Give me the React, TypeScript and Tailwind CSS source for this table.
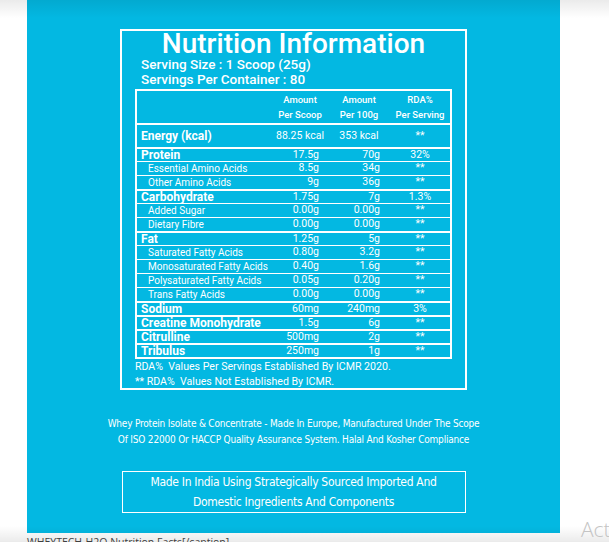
type Row = {
  label: string;
  scoop: string;
  per100: string;
  rda: string;
  sub?: boolean;
};

const rows: Row[] = [
  { label: "Protein", scoop: "17.5g", per100: "70g", rda: "32%" },
  { label: "Essential Amino Acids", scoop: "8.5g", per100: "34g", rda: "**", sub: true },
  { label: "Other Amino Acids", scoop: "9g", per100: "36g", rda: "**", sub: true },
  { label: "Carbohydrate", scoop: "1.75g", per100: "7g", rda: "1.3%" },
  { label: "Added Sugar", scoop: "0.00g", per100: "0.00g", rda: "**", sub: true },
  { label: "Dietary Fibre", scoop: "0.00g", per100: "0.00g", rda: "**", sub: true },
  { label: "Fat", scoop: "1.25g", per100: "5g", rda: "**" },
  { label: "Saturated Fatty Acids", scoop: "0.80g", per100: "3.2g", rda: "**", sub: true },
  { label: "Monosaturated Fatty Acids", scoop: "0.40g", per100: "1.6g", rda: "**", sub: true },
  { label: "Polysaturated Fatty Acids", scoop: "0.05g", per100: "0.20g", rda: "**", sub: true },
  { label: "Trans Fatty Acids", scoop: "0.00g", per100: "0.00g", rda: "**", sub: true },
  { label: "Sodium", scoop: "60mg", per100: "240mg", rda: "3%" },
  { label: "Creatine Monohydrate", scoop: "1.5g", per100: "6g", rda: "**" },
  { label: "Citrulline", scoop: "500mg", per100: "2g", rda: "**" },
  { label: "Tribulus", scoop: "250mg", per100: "1g", rda: "**" },
];

const cols = "grid grid-cols-[135px_56px_62px_1fr]";

function NutrientRow({ row }: { row: Row }) {
  return (
    <div
      className={`${cols} h-[14px] items-center border-white ${
        row.sub ? "border-t" : "border-t-2"
      }`}
    >
      <span
        className={
          row.sub
            ? "pl-[11px] text-[10px] leading-none"
            : "pl-[4px] text-[12px] font-bold leading-none"
        }
      >
        {row.label}
      </span>
      <span className="pr-[9px] text-right text-[10.5px] leading-none">{row.scoop}</span>
      <span className="pr-[10px] text-right text-[10.5px] leading-none">{row.per100}</span>
      <span className="text-center text-[10.5px] leading-none">{row.rda}</span>
    </div>
  );
}

export default function App() {
  return (
    <div className="relative h-[542px] w-[609px] overflow-hidden bg-white font-['Roboto',sans-serif]">
      <div className="flex">
        <div className="w-[27px] shrink-0" />
        <div className="flex h-[533px] w-[533px] shrink-0 flex-col items-center bg-[#03b8e2] text-white">
          <div className="mt-[29px] flex h-[361px] w-[347px] flex-col border-2 border-white px-[13px]">
            <h1 className="h-[26px] text-center text-[28px] font-medium leading-[26px]">
              Nutrition Information
            </h1>
            <div className="pl-[6px] text-[13.5px] font-medium leading-[15px]">
              <p>Serving Size : 1 Scoop (25g)</p>
              <p>Servings Per Container : 80</p>
            </div>

            <div className="mt-[2px] border-2 border-white">
              <div className={`${cols} h-[32px] items-center text-[9.5px] font-medium leading-[15px]`}>
                <span />
                <span className="text-center">
                  Amount
                  <br />
                  Per Scoop
                </span>
                <span className="text-center">
                  Amount
                  <br />
                  Per 100g
                </span>
                <span className="text-center">
                  RDA%
                  <br />
                  Per Serving
                </span>
              </div>
              <div className={`${cols} h-[24px] items-center border-t-2 border-white`}>
                <span className="pl-[4px] text-[12px] font-bold">Energy (kcal)</span>
                <span className="text-center text-[10.5px]">88.25 kcal</span>
                <span className="text-center text-[10.5px]">353 kcal</span>
                <span className="text-center text-[10.5px]">**</span>
              </div>
              {rows.map((row) => (
                <NutrientRow key={row.label} row={row} />
              ))}
            </div>

            <div className="text-[10.6px] leading-[15px]">
              <p>RDA%&nbsp; Values Per Servings Established By ICMR 2020.</p>
              <p>**&nbsp;RDA%&nbsp; Values Not Established By ICMR.</p>
            </div>
          </div>

          <div className="mt-[26px] text-center font-['DejaVu_Sans_Condensed',sans-serif] text-[10px] leading-[16px] tracking-[-0.2px]">
            <p>Whey Protein Isolate &amp; Concentrate - Made In Europe, Manufactured Under The Scope</p>
            <p>Of ISO 22000 Or HACCP Quality Assurance System. Halal And Kosher Compliance</p>
          </div>

          <div className="mt-[23px] w-[344px] border border-white text-center font-['DejaVu_Sans_Condensed',sans-serif] text-[12px] leading-[20px] tracking-[-0.3px]">
            <p>Made In India Using Strategically Sourced Imported And</p>
            <p>Domestic Ingredients And Components</p>
          </div>
        </div>
        <div className="flex-1" />
      </div>

      <p className="ml-[27px] mt-[2px] font-['Open_Sans',sans-serif] text-[10.5px] leading-[14px] text-[#444]">
        WHEYTECH-H2O Nutrition Facts[/caption]
      </p>

      <div className="pointer-events-none absolute inset-x-0 top-0 h-[18px] bg-gradient-to-b from-black/8 to-transparent" />
      <div className="pointer-events-none absolute inset-x-0 bottom-0 h-[16px] bg-gradient-to-b from-transparent to-black/8" />
      <span className="absolute left-[581px] top-[514px] font-['Open_Sans',sans-serif] text-[21px] font-light text-[#c4c4c4]">
        Activate
      </span>
    </div>
  );
}
